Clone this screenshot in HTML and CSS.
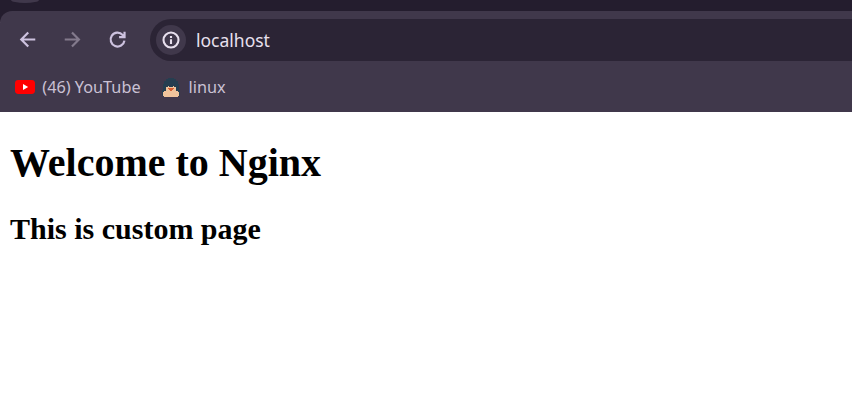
FILE: index.html
```html
<!DOCTYPE html>
<html lang="en">
<head>
<meta charset="utf-8">
<title>localhost</title>
<link rel="stylesheet" href="styles.css">
</head>
<body>
<div class="tabstrip"><div class="tab-button"></div></div>
<header class="chrome">
  <div class="toolbar">
    <svg class="nav-icon" viewBox="0 0 20 20"><path d="M17.4 10H4.2M10.7 3.4L4.1 10l6.6 6.6"/></svg>
    <svg class="nav-icon disabled" viewBox="0 0 20 20"><path d="M2.6 10h13.4M9.5 3.4l6.6 6.6-6.6 6.6"/></svg>
    <svg class="nav-icon" viewBox="0 0 20 20"><path d="M16.6 11A6.6 6.6 0 1 1 14.9 5.6l1.2 1.4M16.7 2.6v5.1h-5.2"/></svg>
    <div class="omnibox">
      <span class="site-info"><svg viewBox="0 0 20 20"><circle cx="10" cy="10" r="7.5"/><path d="M10 9.2v4.7M10 6v1.9"/></svg></span>
      <span class="url">localhost</span>
    </div>
  </div>
  <nav class="bookmarks">
    <a class="bookmark">
      <svg class="youtube" viewBox="0 0 20 14"><rect width="20" height="14" rx="3.4" fill="#f00"/><path d="M8 4v6l5.2-3z" fill="#fff"/></svg>
      <span>(46) YouTube</span>
    </a>
    <a class="bookmark">
      <svg class="penguin" viewBox="0 0 18 20" shape-rendering="crispEdges">
        <path fill="#263e50" d="M6 1h6v1h2v2h2v3h1v6h1v6H0v-6h1V7h1V4h2V2h2z"/>
        <path fill="#efc49c" d="M4 10h2V9h1v1h4V9h1v1h2v4h2v1h1v4h-1v1H2v-1H1v-4h1v-1h2z"/>
        <path fill="#d95f32" d="M6 11h6v1h-1v1h-1v1H8v-1H7v-1H6z"/>
      </svg>
      <span>linux</span>
    </a>
  </nav>
</header>
<main class="page">
  <h1>Welcome to Nginx</h1>
  <h2>This is custom page</h2>
</main>
</body>
</html>
```

FILE: styles.css
```css
* { box-sizing: border-box; }
body { margin: 0; background: #fff; overflow: hidden; }
.tabstrip { height: 22px; margin-bottom: -11px; padding-left: 11px; background: #241d2e; }
.tab-button { width: 28px; height: 3px; border-radius: 0 0 14px 14px / 0 0 3px 3px; background: #40384b; }
.chrome {
  position: relative;
  height: 101px;
  background: #40384b;
  border-top-left-radius: 12px;
  font-family: "Noto Sans", sans-serif;
}
.toolbar { display: flex; align-items: center; padding: 8px 0 0 17px; }
.nav-icon {
  flex: none;
  width: 21px;
  height: 21px;
  margin: 0 24px 1px 0;
  fill: none;
  stroke: #cdc2df;
  stroke-width: 2.1;
}
.nav-icon.disabled { stroke: #837a8c; }
.omnibox {
  display: flex;
  flex: 1;
  align-items: center;
  height: 42px;
  margin-left: -2px;
  padding-left: 6px;
  border-radius: 21px 0 0 21px;
  background: #2b2435;
}
.site-info {
  display: flex;
  align-items: center;
  justify-content: center;
  width: 30px;
  height: 30px;
  border-radius: 50%;
  background: #40384b;
}
.site-info svg { width: 20px; height: 20px; fill: none; stroke: #e8e0ee; stroke-width: 2.1; }
.url { margin-left: 10px; color: #e8e0ee; font-size: 17.5px; line-height: 24px; }
.bookmarks { display: flex; align-items: center; height: 30px; margin-top: 11px; padding-left: 15px; }
.bookmark { display: flex; align-items: center; margin-right: 21px; color: #cac1d4; font-size: 16.25px; line-height: 22px; }
.youtube { width: 20px; height: 14px; margin-right: 7.3px; }
.penguin { width: 18px; height: 20px; margin-right: 9px; }
.page { display: flow-root; margin: 0 10px; color: #000; font-family: "Liberation Serif", serif; }
h1 { margin: 26.8px 0 26px; font-size: 40px; }
h2 { margin: 24.9px 0; font-size: 30px; }
```
